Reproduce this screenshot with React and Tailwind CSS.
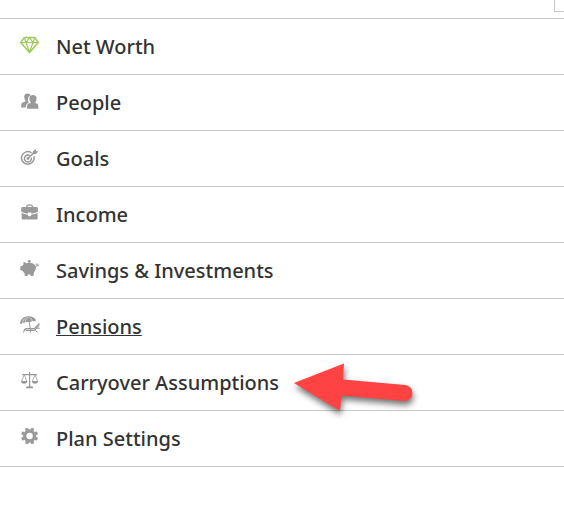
import React from 'react';

function Icon({ className = 'text-[#999999]', children }) {
    return (
        <svg viewBox="0 0 22 21" fill="currentColor" aria-hidden="true" className={`w-[22px] h-[21px] shrink-0 ${className}`}>
            {children}
        </svg>
    );
}

function DiamondIcon() {
    return (
        <Icon className="text-[#9ccb5a]">
            <g fill="none" stroke="currentColor" strokeWidth="1.5" strokeLinejoin="round">
                <path d="M4.2 1.6h10.6l3.5 4.9-8.8 9.9L.7 6.5z" />
                <path d="M.7 6.5h17.6M9.5 1.6 6 6.5l3.5 9.9L13 6.5zM4.2 1.6 6 6.5M14.8 1.6 13 6.5" strokeWidth="1.2" />
            </g>
        </Icon>
    );
}

function PeopleIcon() {
    return (
        <Icon>
            <path d="M7.3 1.5c2 0 3.1.9 3.3 2.1C8.6 4.3 7.8 5.9 8 7.9c.1 1.1.4 1.9.9 2.5-2 .8-2.9 1.900-3.100 5.200H1.200c0-3.600.2-4.700 2.100-5.400 1.500-.5 2.300-.8 2.300-1.500 0-.8-1.400-1.300-1.400-3.900 0-2 1.100-3.300 3.100-3.300z" />
            <path d="M13 3c2.200 0 3.600 1.400 3.600 3.400 0 2-.9 3-1.300 3.900-.2.7.1.9 1.400 1.300 1.500.5 1.700 1.900 1.700 5.200H7c0-3.400.2-4.700 1.700-5.200 1.500-.5 2.300-.7 2-1.400-.5-.9-1.300-1.800-1.300-3.800C9.400 4.400 10.800 3 13 3z" />
        </Icon>
    );
}

function GoalsIcon() {
    return (
        <Icon>
            <g fill="none" stroke="currentColor" strokeWidth="1.5">
                <path d="M11.5 4.800A6.300 6.300 0 1 0 13.900 8.300" />
                <path d="M9.800 7.600a3.500 3.500 0 1 0 1.500 2" />
                <path d="M8 10.300 15 3.800" />
            </g>
            <circle cx="8" cy="10.600" r="1.400" />
            <path d="M12.400 6.200 12.900 3.400 15.600.9l.4 2 2.500.5-2.700 2.500z" />
        </Icon>
    );
}

function BriefcaseIcon() {
    return (
        <Icon>
            <path fill="none" stroke="currentColor" strokeWidth="1.2" d="M6.500 3.500Q6.500.8 9.600.8t3.100 2.700" />
            <path d="M2.700 3.100h13.700q1.500 0 1.500 1.300v3.400q-3 1.600-6.600 2V8.600H7.900v1.200q-3.600-.4-6.700-2V4.400q0-1.300 1.500-1.300z" />
            <path d="M1.600 9q2.900 1.400 6.300 1.700.3 1.800 1.700 1.800t1.700-1.800q3.400-.3 6.300-1.700v5.600q0 .9-.9.900H2.500q-.9 0-.9-.9z" />
            <path d="M8.700 9.200h1.800v1.300l-.9.900-.9-.9z" fill="#ffffff" />
        </Icon>
    );
}

function PiggyIcon() {
    return (
        <Icon>
            <circle cx="9.300" cy="1.500" r="1.400" />
            <path d="M3.200 2c1.300 0 2.200.5 2.800 1.200 3.200-1 7-.6 8.800 1.900 1.700 2.300 1.400 5-.9 7.400l-.5 3.600h-2.600l-.4-1.600H7.900l-.4 1.600H4.900l-.5-3c-.8-.6-1.300-1.500-2-2.300L.3 9.900V6.600l1.900-.6c.4-.7.8-1.200 1.500-1.700z" />
            <path fill="none" stroke="currentColor" strokeWidth="1" d="M14.800 6.500c3.300.1 3.900-2.600 2.200-2.700-1.500 0-1 2.300 1.500 1.700" />
        </Icon>
    );
}

function BeachIcon() {
    return (
        <Icon>
            <path d="M0 7.500C.3 3.300 3.600.2 8.200.2c3.700 0 7 1.500 8 4.300l-2.200.7-1.700-.3-1.900 1-2.200.1-1.500-.1L5 6.800l-2.200.1-1.400 1z" />
            <path fill="none" stroke="#ffffff" strokeWidth=".6" d="M8 1.400C6.300 2.600 5.300 4.400 5 6.800M9.400 1.400c1.600 1 2.400 2.200 2.900 3.700M5.600 1.800C3.800 3 2.800 4.600 2.500 6.900" />
            <g fill="none" stroke="currentColor" strokeLinecap="round">
                <path strokeWidth="1" d="M9 5 10.200 12" />
                <path strokeWidth="1.500" d="M4.500 13.800 6 12.700h8.500l4.500-4.600" />
                <path strokeWidth="1" d="M4.500 13.800 3.500 16.200M6 14.500h8.500l4.500-4.800M10.500 13v3.200M15 14.200l2.300 2M16.500 12.200h3" />
            </g>
        </Icon>
    );
}

function ScaleIcon() {
    return (
        <Icon>
            <path d="M9 0h1.200v14.500H9zM2.200 2h14.800v1.200H2.200zM6 15.700q.2-1.700 3.600-1.700t3.600 1.700v.6H6z" />
            <path d="M1 9h6.400q-.3 2.800-3.200 2.800T1 9zM11.800 9h6.400q-.3 2.800-3.200 2.800T11.800 9z" />
            <path fill="none" stroke="currentColor" strokeWidth=".8" d="M4.200 2.700 1.600 9.300M4.200 2.700l2.600 6.600M15 2.700l-2.600 6.600M15 2.700l2.600 6.600" />
        </Icon>
    );
}

function GearIcon() {
    return (
        <Icon>
            <g transform="translate(9.600 8)">
                <path fillRule="evenodd" d="M0-6.500a6.500 6.500 0 1 0 0 13a6.500 6.500 0 1 0 0-13zM0-3.200a3.200 3.200 0 1 1 0 6.400a3.200 3.200 0 1 1 0-6.400z" />
                {[22, 67, 112, 157, 202, 247, 292, 337].map((angle) => (
                    <path key={angle} transform={`rotate(${angle})`} d="M-1.900-6 -1.300-8.500H1.300L1.900-6z" />
                ))}
            </g>
        </Icon>
    );
}

// red callout pointing back at the row label
function Arrow() {
    return (
        <svg viewBox="0 0 130 64" aria-hidden="true" className="absolute left-[288px] top-0.5 z-10 w-[130px] h-16 pointer-events-none drop-shadow-[1px_4px_3px_rgba(0,0,0,0.55)]">
            <path fill="#ff4343" d="M6 26 56 6.500l-1 16L117 28a8 8 0 0 1-1 16L53.500 38.500 52 54z" />
        </svg>
    );
}

const items = [
    { label: 'Net Worth', icon: DiamondIcon },
    { label: 'People', icon: PeopleIcon },
    { label: 'Goals', icon: GoalsIcon },
    { label: 'Income', icon: BriefcaseIcon },
    { label: 'Savings & Investments', icon: PiggyIcon },
    { label: 'Pensions', icon: BeachIcon, active: true },
    { label: 'Carryover Assumptions', icon: ScaleIcon, marked: true },
    { label: 'Plan Settings', icon: GearIcon },
];

export default function App() {
    return (
        <div className="min-h-screen bg-white overflow-x-hidden font-['Noto_Sans',sans-serif] text-[#333333]">
            <div className="flex justify-end h-[19px] border-b border-[#c8c8c8]">
                <div className="w-[10px] h-3 border-l border-b border-[#c8c8c8]" />
            </div>
            <nav>
                <ul>
                    {items.map(({ label, icon: ItemIcon, active, marked }) => (
                        <li key={label} className="relative h-14 border-b border-[#c8c8c8]">
                            <a href="#" className="flex items-center gap-[14px] h-full pl-5">
                                <ItemIcon />
                                <span className={`text-[20px] leading-7 font-medium ${active ? 'underline decoration-1' : ''}`}>{label}</span>
                            </a>
                            {marked && <Arrow />}
                        </li>
                    ))}
                </ul>
            </nav>
        </div>
    );
}
